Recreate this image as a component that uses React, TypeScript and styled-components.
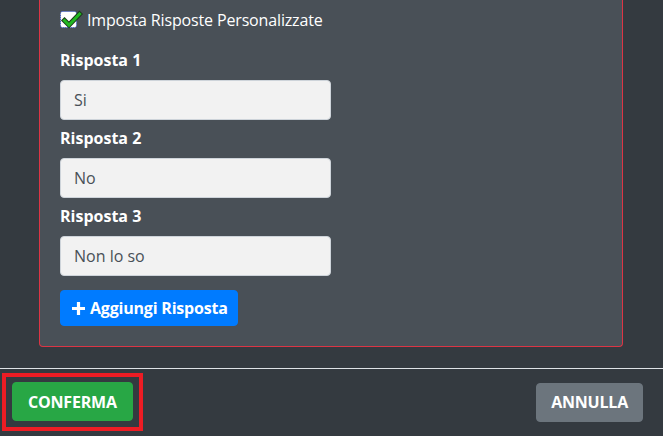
import React from "react";
import styled, { createGlobalStyle } from "styled-components";

const GlobalStyle = createGlobalStyle`
  html, body {
    margin: 0;
    padding: 0;
    background: #343a40;
    font-family: "Open Sans", "Noto Sans", "Liberation Sans", sans-serif;
    font-size: 16px;
    line-height: 1.5;
    color: #fff;
    overflow: hidden;
  }
  * { box-sizing: border-box; }
`;

const Page = styled.div`
  width: 663px;
  height: 436px;
  display: flex;
  flex-direction: column;
  background: #343a40;
`;

const ModalBody = styled.div`
  padding: 0 40px 0 39px;
`;

const Card = styled.div`
  background: #495057;
  border: 1px solid #dc3545;
  border-top: none;
  border-radius: 0 0 4px 4px;
  padding: 8px 20px 20px;
`;

const CheckRow = styled.label`
  display: flex;
  align-items: center;
  height: 24px;
  margin-bottom: 16px;
  color: #fff;
  letter-spacing: -0.15px;
`;

const CheckIcon = styled.svg`
  width: 22px;
  height: 18px;
  margin-right: 5px;
  flex: none;
  overflow: visible;
`;

const FieldGroup = styled.div`
  display: flex;
  flex-direction: column;
  margin-bottom: 6px;
`;

const FieldLabel = styled.label`
  font-weight: 700;
  line-height: 24px;
  margin-bottom: 8px;
  color: #fff;
`;

const TextInput = styled.input`
  width: 50%;
  height: 40px;
  padding: 0 13px;
  font: inherit;
  color: #495057;
  background: #f2f2f2;
  border: 1px solid #ced4da;
  border-radius: 4px;
  outline: none;
`;

const AddButton = styled.button`
  display: inline-flex;
  align-items: center;
  gap: 4px;
  margin-top: 8px;
  height: 36px;
  padding: 0 9px 0 10px;
  font: inherit;
  font-weight: 700;
  letter-spacing: -0.2px;
  color: #fff;
  background: #007bff;
  border: 1px solid #007bff;
  border-radius: 4px;
`;

const Footer = styled.div`
  margin-top: auto;
  border-top: 1px solid #dee2e6;
  padding: 4px 20px 5px 2px;
  display: flex;
  align-items: center;
  justify-content: space-between;
`;

const Highlight = styled.div`
  border: 4px solid #ed1c24;
  padding: 5px 6px 6px;
  display: flex;
`;

const FooterButton = styled.button<{ $variant: "success" | "secondary" }>`
  height: 39px;
  padding: 0 ${(p) => (p.$variant === "success" ? "15px" : "14px")};
  font: inherit;
  font-weight: 700;
  text-transform: uppercase;
  letter-spacing: -0.2px;
  color: #fff;
  background: ${(p) => (p.$variant === "success" ? "#28a745" : "#6c757d")};
  border: 1px solid ${(p) => (p.$variant === "success" ? "#28a745" : "#6c757d")};
  border-radius: 4px;
`;

const answers = ["Si", "No", "Non lo so"];

export default function App() {
  return (
    <Page>
      <GlobalStyle />
      <ModalBody>
        <Card>
          <CheckRow>
            <CheckIcon viewBox="0 0 22 18">
              <rect x="0.5" y="0.5" width="16" height="16" rx="2" fill="#fff" stroke="#3b5bdb" strokeWidth="1" strokeDasharray="1 1" />
              <polyline points="4.5,9.5 9,14 19.5,3" fill="none" stroke="#1b3a1b" strokeWidth="5" strokeLinecap="square" strokeLinejoin="miter" />
              <polyline points="4.5,9.5 9,14 19.5,3" fill="none" stroke="#22b822" strokeWidth="3" strokeLinecap="square" strokeLinejoin="miter" />
            </CheckIcon>
            Imposta Risposte Personalizzate
          </CheckRow>
          {answers.map((a, i) => (
            <FieldGroup key={i}>
              <FieldLabel>Risposta {i + 1}</FieldLabel>
              <TextInput defaultValue={a} />
            </FieldGroup>
          ))}
          <AddButton>
            <svg width="15" height="15" viewBox="0 0 15 15">
              <path d="M7.5 1v13M1 7.5h13" stroke="#fff" strokeWidth="3.2" />
            </svg>
            Aggiungi Risposta
          </AddButton>
        </Card>
      </ModalBody>
      <Footer>
        <Highlight>
          <FooterButton $variant="success">Conferma</FooterButton>
        </Highlight>
        <FooterButton $variant="secondary">Annulla</FooterButton>
      </Footer>
    </Page>
  );
}
